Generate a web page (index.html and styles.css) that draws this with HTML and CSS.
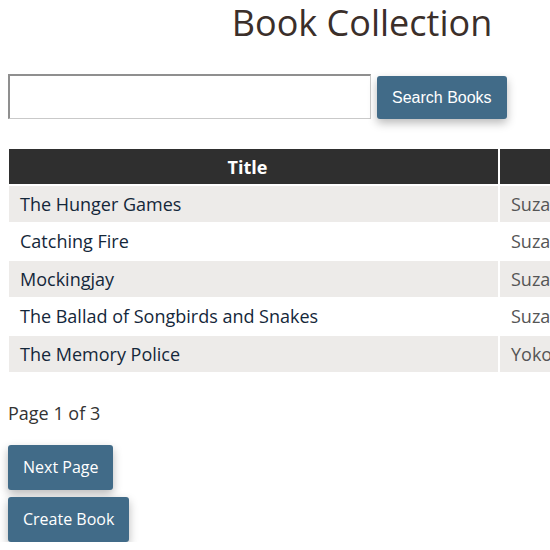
FILE: index.html
```html
<!DOCTYPE html>
<html lang="en">
<head>
<meta charset="utf-8">
<title>Book Collection</title>
<link rel="stylesheet" href="styles.css">
</head>
<body>
<div class="page">
  <h1 class="heading">Book Collection</h1>
  <form class="search">
    <input class="search-input" type="text">
    <button class="search-btn" type="button">Search Books</button>
  </form>
  <table class="books">
    <thead>
      <tr><th class="col-title">Title</th><th class="col-author">Author</th><th class="col-year">Year</th></tr>
    </thead>
    <tbody>
      <tr><td>The Hunger Games</td><td class="author">Suzanne Collins</td><td class="author">2008</td></tr>
      <tr><td>Catching Fire</td><td class="author">Suzanne Collins</td><td class="author">2009</td></tr>
      <tr><td>Mockingjay</td><td class="author">Suzanne Collins</td><td class="author">2010</td></tr>
      <tr><td>The Ballad of Songbirds and Snakes</td><td class="author">Suzanne Collins</td><td class="author">2020</td></tr>
      <tr><td>The Memory Police</td><td class="author">Yoko Ogawa</td><td class="author">1994</td></tr>
    </tbody>
  </table>
  <p class="pager">Page 1 of 3</p>
  <div class="actions">
    <button class="btn" type="button">Next Page</button>
    <button class="btn" type="button">Create Book</button>
  </div>
</div>
</body>
</html>
```
FILE: styles.css
```css
html, body {
  margin: 0;
  padding: 0;
  background: #ffffff;
}
body {
  padding: 0 8px;
  font-family: "Open Sans", "Noto Sans", sans-serif;
  color: #333333;
}
.page {
  width: 708px;
}
.heading {
  margin: 3px 0 0;
  font-size: 36px;
  line-height: 40px;
  font-weight: 400;
  color: #3b2f2a;
  text-align: center;
}
.search {
  display: flex;
  align-items: flex-end;
  gap: 6px;
  margin-top: 31px;
}
.search-input {
  width: 363px;
  height: 45px;
  box-sizing: border-box;
  margin: 0;
  border: 1px solid #c9c9c9;
  border-top-color: #8f8f8f;
  border-left-color: #8f8f8f;
  border-width: 2px 1px 1px 2px;
  background: #fff;
}
.search-btn {
  height: 43px;
  padding: 0 15px;
  border: none;
  border-radius: 3px;
  background: #416b88;
  color: #ffffff;
  font-family: "Liberation Sans", Arial, sans-serif;
  font-size: 16px;
  box-shadow: 0 4px 10px rgba(0, 0, 0, 0.28);
}
.books {
  margin: 28px 0 0 -1px;
  width: 712px;
  table-layout: fixed;
  border-spacing: 2px;
  font-size: 18px;
}
.books th {
  background: #2f2f2f;
  color: #ffffff;
  font-weight: 700;
  height: 35px;
  padding: 0 12px;
  line-height: 24px;
}
.col-title {
  width: 465px;
}
.books th.col-title {
  padding: 0 24px 0 12px;
  width: 453px;
}
.col-author {
  width: 160px;
}
.books td {
  height: 35.5px;
  padding: 0 11px;
  line-height: 24px;
  color: #14273a;
  white-space: nowrap;
  overflow: hidden;
}
.books td.author {
  color: #555555;
}
.books tbody tr:nth-child(odd) td {
  background: #edebe9;
}
.pager {
  margin: 27px 0 0;
  font-size: 18px;
  line-height: 24px;
  color: #333333;
}
.actions {
  display: flex;
  flex-direction: column;
  align-items: flex-start;
  gap: 7px;
  margin-top: 20px;
}
.btn {
  height: 45px;
  padding: 0 15px;
  border: none;
  border-radius: 3px;
  background: #416b88;
  color: #ffffff;
  font-family: "Open Sans", "Noto Sans", sans-serif;
  font-size: 16px;
  box-shadow: 0 4px 10px rgba(0, 0, 0, 0.28);
}
```
